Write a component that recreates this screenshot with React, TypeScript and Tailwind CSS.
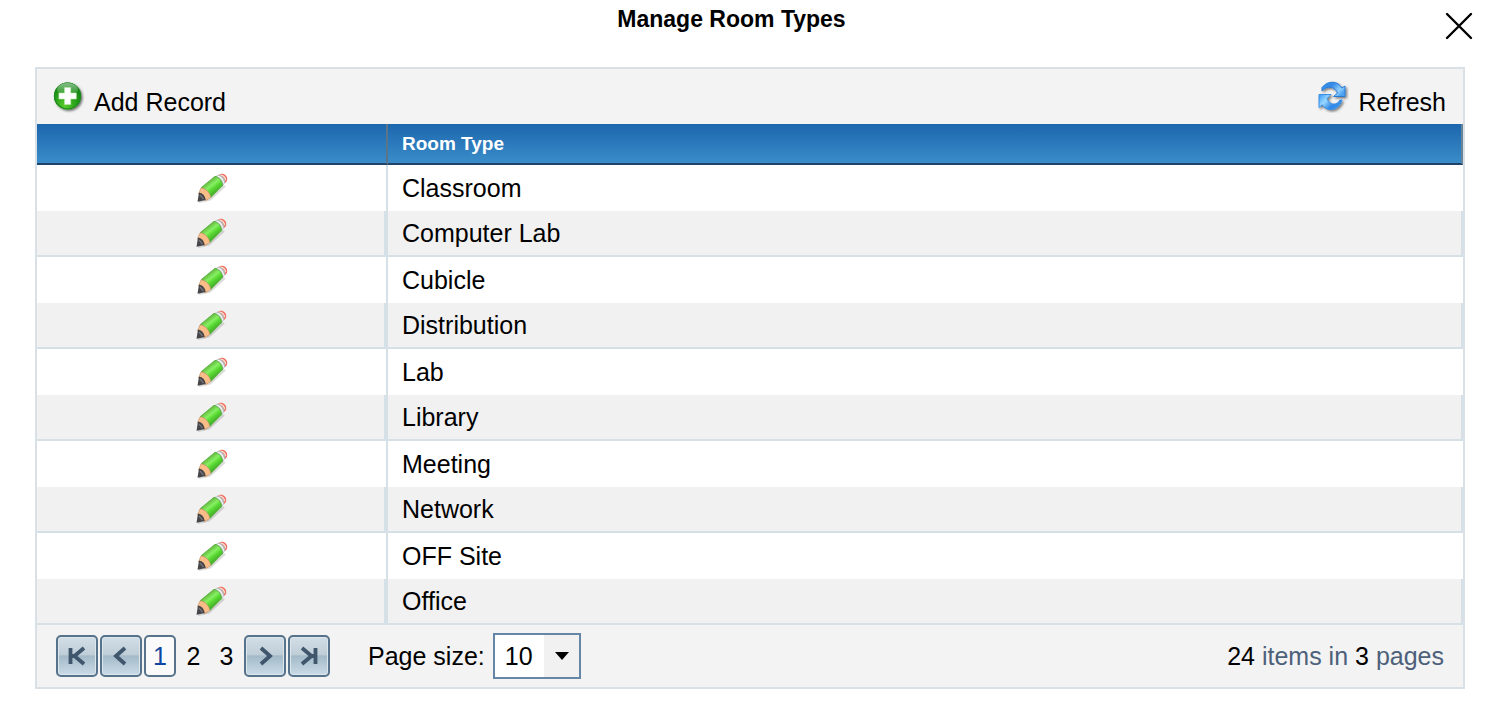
import { useState } from 'react';

type RoomType = {
  id: number;
  name: string;
};

const roomTypes: RoomType[] = [
  { id: 1, name: 'Classroom' },
  { id: 2, name: 'Computer Lab' },
  { id: 3, name: 'Cubicle' },
  { id: 4, name: 'Distribution' },
  { id: 5, name: 'Lab' },
  { id: 6, name: 'Library' },
  { id: 7, name: 'Meeting' },
  { id: 8, name: 'Network' },
  { id: 9, name: 'OFF Site' },
  { id: 10, name: 'Office' },
];

const pages = [1, 2, 3];

const AddIcon = () => (
  <svg className="w-8 h-8 shrink-0" viewBox="0 0 32 32" aria-hidden="true">
    <defs>
      <radialGradient id="addFill" cx="0.4" cy="0.85" r="0.85">
        <stop offset="0" stopColor="#5ccc2c" />
        <stop offset="0.45" stopColor="#2ba31b" />
        <stop offset="1" stopColor="#0c7a12" />
      </radialGradient>
      <linearGradient id="addShine" x1="0" y1="0" x2="0" y2="1">
        <stop offset="0" stopColor="#fff" stopOpacity="0.5" />
        <stop offset="1" stopColor="#fff" stopOpacity="0" />
      </linearGradient>
      <filter id="addShadow" x="-20%" y="-20%" width="150%" height="150%">
        <feDropShadow dx="1.5" dy="1.5" stdDeviation="1" floodColor="#000" floodOpacity="0.55" />
      </filter>
    </defs>
    <circle cx="14.5" cy="15" r="13.600" fill="url(#addFill)" filter="url(#addShadow)" />
    <circle cx="14.5" cy="15" r="13" fill="none" stroke="#1d8a1c" strokeWidth="1.2" />
    <ellipse cx="14.5" cy="8.5" rx="10.5" ry="6.5" fill="url(#addShine)" />
    <path d="M11.500 6.500h6.200v5.500h5.600v6h-5.600v5.500h-6.200V18H5.900v-6h5.600z" fill="#fff" stroke="#b5e6a8" strokeWidth="0.6" />
  </svg>
);

const RefreshIcon = () => (
  <svg className="w-8 h-8 shrink-0" viewBox="0 0 32 32" aria-hidden="true">
    <defs>
      <linearGradient id="refreshTop" x1="0" y1="0" x2="1" y2="0.6">
        <stop offset="0" stopColor="#3f9bf3" />
        <stop offset="0.4" stopColor="#3288e6" />
        <stop offset="0.8" stopColor="#8fd0ff" />
        <stop offset="1" stopColor="#4ea2f2" />
      </linearGradient>
      <linearGradient id="refreshBottom" x1="0" y1="0.2" x2="1" y2="0.8">
        <stop offset="0" stopColor="#4ba6f8" />
        <stop offset="0.3" stopColor="#9ad8ff" />
        <stop offset="0.65" stopColor="#3288e6" />
        <stop offset="1" stopColor="#3f97ee" />
      </linearGradient>
      <filter id="refreshShadow" x="-20%" y="-20%" width="150%" height="150%">
        <feDropShadow dx="1.5" dy="1.5" stdDeviation="0.9" floodColor="#000" floodOpacity="0.5" />
      </filter>
    </defs>
    <g filter="url(#refreshShadow)" strokeWidth="1" strokeLinejoin="round">
      <path
        d="M5 6.500C8 2.800 11.500 1.200 15.500 1.200c4.300 0 7.400 2.300 9.200 5.800L28 5V15.500H16.500l4-3.500C18.800 8 15.500 5.800 11.500 6.200 9 6.500 7 7.800 5 10z"
        fill="url(#refreshTop)"
        stroke="#2a7ad4"
      />
      <path
        d="M25 19C23 25 18.800 28.500 14 28.500c-4 0-7-1.700-8.800-4.700L2 26.500V13.500H14l-4 4c1.500 4 4 5.800 7 5.600 2.500-.1 4.500-1.600 6-4.100z"
        fill="url(#refreshBottom)"
        stroke="#3a8ee6"
      />
    </g>
  </svg>
);

const PencilIcon = () => (
  <svg className="w-8 h-8" viewBox="0 0 32 32" aria-hidden="true">
    <defs>
      <linearGradient id="pencilBody" x1="0.3" y1="0.25" x2="0.7" y2="0.75">
        <stop offset="0" stopColor="#62b53f" />
        <stop offset="0.4" stopColor="#86f062" />
        <stop offset="0.65" stopColor="#58d932" />
        <stop offset="1" stopColor="#48ad2c" />
      </linearGradient>
    </defs>
    <path d="M3 30 14 27.500 29 14" fill="none" stroke="#000" strokeOpacity="0.14" strokeWidth="2" />
    <path d="M22 3.500 25 1.800C28.500 1.300 31.500 4 31.200 7.500c0 1.400-.8 2.300-1.700 3.200z" fill="#ec6a58" />
    <path d="M24.500 3c2.600.4 4.800 2.400 5.200 5.400" fill="none" stroke="#ffd8ce" strokeWidth="1.500" />
    <path d="M18.500 5 22.500 2.500c3.600.6 6.500 3.700 6.800 8L26 15z" fill="#b5bab8" />
    <path d="M21.500 4.200c3.400 1 5.600 3.400 6.200 7.200" fill="none" stroke="#f4f6f5" strokeWidth="1.300" />
    <path d="M5 15.800 19 4.300c3.800.8 7.200 4.600 7.600 9.400L14.800 25.500C13 21 9.500 17 5 15.800z" fill="url(#pencilBody)" stroke="#54ad3c" strokeWidth="0.8" />
    <path d="M5 15.800c5 .6 9.200 5 9.800 9.700L9.500 28.800 2.500 22z" fill="#fabd88" stroke="#b98b62" strokeWidth="0.6" />
    <path d="M3 20.500c3.500.6 6 3.200 6.800 7.500L1.500 29.800z" fill="#454549" />
    <path d="M4 23 7.500 27" stroke="#77777c" strokeWidth="1.200" />
  </svg>
);

type PagerButtonProps = {
  label: string;
  path: string;
};

const PagerButton = ({ label, path }: PagerButtonProps) => (
  <button
    type="button"
    aria-label={label}
    className="flex h-[42px] w-[42px] items-center justify-center rounded-[5px] border-2 border-[#57728b] bg-[linear-gradient(#d3dee6,#c0ced8_46%,#a4bac9_50%,#c9dbe6)] shadow-[inset_0_0_0_1px_#dae5ec]"
  >
    <svg className="h-5 w-5" viewBox="0 0 20 20" fill="none" stroke="#3f566c" strokeWidth="3.800" aria-hidden="true">
      <path d={path} />
    </svg>
  </button>
);

export default function App() {
  const [page, setPage] = useState(1);
  const [pageSize, setPageSize] = useState('10');

  return (
    <div className="bg-white font-['Liberation_Sans',Arial,sans-serif] text-[25px] leading-[30px] text-black">
      <header className="flex h-[67px] items-start pl-[18px] pr-[27px]">
        <h1 className="flex-1 pt-1 text-center text-[23px] font-bold">Manage Room Types</h1>
        <button type="button" aria-label="Close" className="pt-3">
          <svg className="h-7 w-7" viewBox="0 0 28 28" fill="none" stroke="#000" strokeWidth="2.400" strokeLinecap="round">
            <path d="M2 2 26 26M26 2 2 26" />
          </svg>
        </button>
      </header>

      <main className="mx-[35px] border-2 border-[#d9e0e6] bg-[#f3f3f3]">
        <div className="flex h-[55px] justify-between pl-4 pr-[17px] pt-3">
          <button type="button" className="flex items-start gap-[9px]">
            <AddIcon />
            <span className="pt-1.5">Add Record</span>
          </button>
          <button type="button" className="flex items-start gap-[9px]">
            <RefreshIcon />
            <span className="pt-1.5">Refresh</span>
          </button>
        </div>

        <table className="w-full table-fixed border-separate border-spacing-0">
          <colgroup>
            <col className="w-[351px]" />
            <col />
          </colgroup>
          <thead>
            <tr className="h-[41px] bg-linear-to-b from-[#1c66ae] to-[#3c8fca] text-left text-[19px] text-white">
              <th className="border-b-2 border-r-2 border-b-[#1f4468] border-r-[#5c7488] p-0" aria-label="Edit" />
              <th className="border-b-2 border-r-2 border-b-[#1f4468] border-r-[#6b8598] p-0 pl-[14px] leading-6">Room Type</th>
            </tr>
          </thead>
          <tbody>
            {roomTypes.map((room) => (
              <tr key={room.id} className="group h-[46px] bg-white even:bg-[#f1f1f1]">
                <td className="border-r-2 border-[#d6e0e7] p-0 group-even:border-b-2 group-even:border-r-4">
                  <button type="button" aria-label={`Edit ${room.name}`} className="mx-auto block">
                    <PencilIcon />
                  </button>
                </td>
                <td className="border-[#d6e0e7] p-0 pl-[14px] group-even:border-b-2 group-even:border-r-2">{room.name}</td>
              </tr>
            ))}
          </tbody>
        </table>

        <footer className="flex h-[62px] items-center justify-between pl-[19px] pr-[19px]">
          <div className="flex items-center">
            <nav aria-label="Pages" className="flex gap-[2px]">
              <PagerButton label="First page" path="M3.500 2V18M17 2 7.500 10l9.500 8M4 10h6" />
              <PagerButton label="Previous page" path="M14 2 5 10l9 8" />
              {pages.map((n) => (
                <button
                  key={n}
                  type="button"
                  onClick={() => setPage(n)}
                  className={
                    n === page
                      ? 'h-[42px] w-8 rounded-[5px] border-2 border-[#57728b] bg-[#fafafa] text-[#0d45a0]'
                      : 'h-[42px] w-[31px]'
                  }
                >
                  {n}
                </button>
              ))}
              <PagerButton label="Next page" path="M6 2 15 10l-9 8" />
              <PagerButton label="Last page" path="M16.500 2V18M3 2 12.500 10 3 18M16 10h-6" />
            </nav>
            <label htmlFor="pageSize" className="pl-[38px] pr-2">Page size:</label>
            <div className="grid items-center">
              <select
                id="pageSize"
                value={pageSize}
                onChange={(e) => setPageSize(e.target.value)}
                className="col-start-1 row-start-1 h-[46px] w-[88px] appearance-none border-2 border-[#6686a7] bg-linear-to-r from-white from-[49px] to-[#f1f1f1] to-[49px] pl-[10px]"
              >
                <option value="10">10</option>
                <option value="20">20</option>
                <option value="50">50</option>
              </select>
              <svg className="pointer-events-none col-start-1 row-start-1 mr-3 h-2 w-[14px] justify-self-end" viewBox="0 0 14 8" aria-hidden="true">
                <path d="M0 0h14L7 8z" fill="#000" />
              </svg>
            </div>
          </div>
          <p className="text-[#4d607a]">
            <span className="text-black">24</span> items in <span className="text-black">3</span> pages
          </p>
        </footer>
      </main>
    </div>
  );
}
